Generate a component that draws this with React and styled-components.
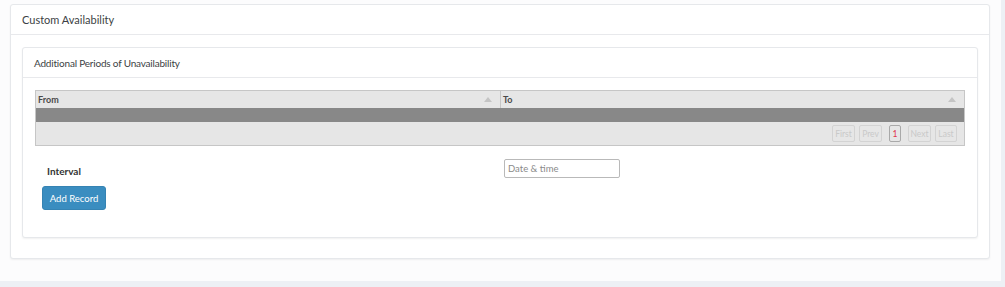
import React from "react";
import styled, { createGlobalStyle } from "styled-components";

const Global = createGlobalStyle`
  html, body {
    margin: 0;
    padding: 0;
    background: #edf0f5;
    font-family: Lato, "Open Sans", sans-serif;
  }
`;

const Page = styled.div`
  width: 1001px;
  height: 281px;
  box-sizing: border-box;
  background: #fcfcfd;
  padding: 4px 11px 0 10px;
`;

const Card = styled.div`
  background: #fff;
  border: 1px solid #e6e8eb;
  border-radius: 3px;
  box-shadow: 0 1px 2px rgba(0, 0, 0, 0.06);
  box-sizing: border-box;
  height: ${(p) => p.h}px;
`;

const CardHeader = styled.div`
  height: 30px;
  display: flex;
  align-items: center;
  padding-left: 11px;
  border-bottom: 1px solid #e8e9ec;
  font-size: ${(p) => p.size || 11}px;
  letter-spacing: ${(p) => p.track || 0}px;
  color: #3c3f44;
  box-sizing: border-box;
`;

const CardBody = styled.div`
  padding: ${(p) => p.pad};
`;

const Grid = styled.div`
  border: 1px solid #c6c6c6;
  background: #e6e6e6;
`;

const HeadRow = styled.div`
  display: grid;
  grid-template-columns: 464px 1fr;
  height: 17px;
`;

const HeadCell = styled.div`
  display: flex;
  align-items: center;
  justify-content: space-between;
  padding: 0 8px 0 2px;
  font-size: 9px;
  font-weight: 700;
  color: #4a4a4a;
  border-left: ${(p) => (p.first ? "none" : "1px solid #c6c6c6")};
`;

const SortArrow = styled.span`
  width: 0;
  height: 0;
  border-left: 4px solid transparent;
  border-right: 4px solid transparent;
  border-bottom: 5px solid #c4c4c4;
`;

const EmptyRow = styled.div`
  height: 14px;
  background: #888;
`;

const Pager = styled.div`
  height: 23px;
  display: flex;
  align-items: center;
  justify-content: flex-end;
  padding-right: 7px;
  gap: 4px;
`;

const PageBtn = styled.span`
  height: 17px;
  width: ${(p) => p.w}px;
  box-sizing: border-box;
  display: flex;
  align-items: center;
  justify-content: center;
  font-size: 8.5px;
  color: ${(p) => (p.current ? "#e0334a" : "#c9c9c9")};
  border: 1px solid ${(p) => (p.current ? "#a9a9a9" : "#d3d3d3")};
  border-radius: 2px;
  margin: ${(p) => (p.current ? "0 3px" : "0")};
`;

const FormRow = styled.div`
  display: grid;
  grid-template-columns: 469px 1fr;
  margin-top: 13px;
`;

const Label = styled.div`
  padding: 6px 0 0 12px;
  font-size: 10px;
  font-weight: 700;
  color: #333;
`;

const Input = styled.input`
  display: block;
  width: 116px;
  height: 19px;
  box-sizing: border-box;
  border: 1px solid #b9b9b9;
  border-radius: 2px;
  padding: 0 3px;
  font-family: Lato, "Open Sans", sans-serif;
  font-size: 9.5px;
  color: #555;
  outline: none;
  &::placeholder {
    color: #8a8a8a;
  }
`;

const Button = styled.button`
  display: block;
  margin: 8px 0 0 7px;
  width: 64px;
  height: 24px;
  background: #3a8dc0;
  border: 1px solid #3583b3;
  border-radius: 3px;
  color: #fff;
  font-family: Lato, "Open Sans", sans-serif;
  font-size: 9.5px;
  padding: 0;
`;

const pages = [
  { label: "First", w: 23 },
  { label: "Prev", w: 23 },
  { label: "1", w: 12, current: true },
  { label: "Next", w: 23 },
  { label: "Last", w: 22 },
];

export default function App() {
  return (
    <>
      <Global />
      <Page>
        <Card h={255}>
          <CardHeader>Custom Availability</CardHeader>
          <CardBody pad="12px 11px 0 11px">
            <Card h={191}>
              <CardHeader size={10} track={-0.2}>
                Additional Periods of Unavailability
              </CardHeader>
              <CardBody pad="12px 12px 0 12px">
                <Grid>
                  <HeadRow>
                    <HeadCell first>
                      From <SortArrow />
                    </HeadCell>
                    <HeadCell>
                      To <SortArrow />
                    </HeadCell>
                  </HeadRow>
                  <EmptyRow />
                  <Pager>
                    {pages.map((p) => (
                      <PageBtn key={p.label} w={p.w} current={p.current}>
                        {p.label}
                      </PageBtn>
                    ))}
                  </Pager>
                </Grid>
                <FormRow>
                  <Label>Interval</Label>
                  <Input placeholder="Date & time" />
                </FormRow>
                <Button>Add Record</Button>
              </CardBody>
            </Card>
          </CardBody>
        </Card>
      </Page>
    </>
  );
}
